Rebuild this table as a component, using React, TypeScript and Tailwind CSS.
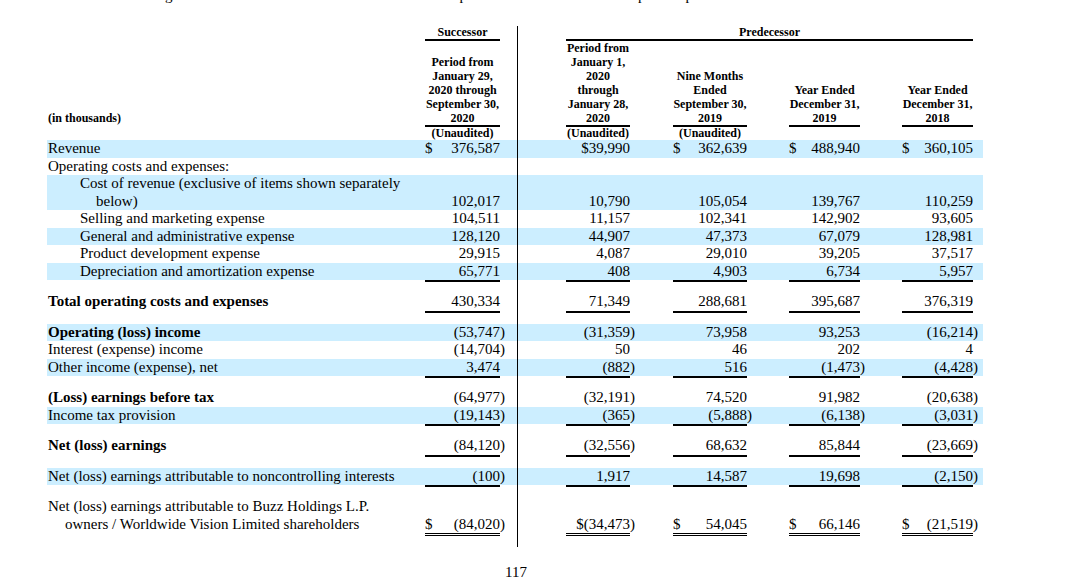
import React, { Fragment } from "react";

const BOX = ["w-[75px]", "w-[64px]", "w-[74px]", "w-[71px]", "w-[71px]"];
const TRAIL = ["w-[17px]", "w-[43px]", "w-[42px]", "w-[42px]", "w-[10px]"];

type Slot = { box?: React.ReactNode; trail?: React.ReactNode; boxClass?: string };

function Frame({
  cls = "",
  label,
  slots,
  labelClass = "",
}: {
  cls?: string;
  label?: React.ReactNode;
  slots?: Slot[];
  labelClass?: string;
}) {
  const s: Slot[] = slots ?? [{}, {}, {}, {}, {}];
  return (
    <div className={`flex w-[936px] ${cls}`}>
      <div className={`w-[378px] shrink-0 ${labelClass}`}>{label}</div>
      {s.map((x, i) => (
        <Fragment key={i}>
          <div className={`${BOX[i]} shrink-0 ${x.boxClass ?? ""}`}>{x.box}</div>
          <div className={`${TRAIL[i]} shrink-0`}>{x.trail}</div>
          {i === 0 && (
            <>
              <div className="w-px shrink-0 bg-black" />
              <div className="w-[48px] shrink-0" />
            </>
          )}
        </Fragment>
      ))}
    </div>
  );
}

type RowDef = {
  label: [string, string][];
  bg?: boolean;
  bold?: boolean;
  cells?: string[];
  line?: "single" | "double";
};

const rows: (RowDef | "gap")[] = [
  { label: [["Revenue", ""]], bg: true, cells: ["$ 376,587", "$39,990", "$ 362,639", "$ 488,940", "$ 360,105"] },
  { label: [["Operating costs and expenses:", ""]] },
  {
    label: [
      ["Cost of revenue (exclusive of items shown separately", "pl-[32px]"],
      ["below)", "pl-[48px]"],
    ],
    bg: true,
    cells: ["102,017", "10,790", "105,054", "139,767", "110,259"],
  },
  { label: [["Selling and marketing expense", "pl-[32px]"]], cells: ["104,511", "11,157", "102,341", "142,902", "93,605"] },
  { label: [["General and administrative expense", "pl-[32px]"]], bg: true, cells: ["128,120", "44,907", "47,373", "67,079", "128,981"] },
  { label: [["Product development expense", "pl-[32px]"]], cells: ["29,915", "4,087", "29,010", "39,205", "37,517"] },
  {
    label: [["Depreciation and amortization expense", "pl-[32px]"]],
    bg: true,
    cells: ["65,771", "408", "4,903", "6,734", "5,957"],
    line: "single",
  },
  "gap",
  {
    label: [["Total operating costs and expenses", ""]],
    bold: true,
    cells: ["430,334", "71,349", "288,681", "395,687", "376,319"],
    line: "single",
  },
  "gap",
  { label: [["Operating (loss) income", ""]], bold: true, bg: true, cells: ["(53,747)", "(31,359)", "73,958", "93,253", "(16,214)"] },
  { label: [["Interest (expense) income", ""]], cells: ["(14,704)", "50", "46", "202", "4"] },
  {
    label: [["Other income (expense), net", ""]],
    bg: true,
    cells: ["3,474", "(882)", "516", "(1,473)", "(4,428)"],
    line: "single",
  },
  "gap",
  { label: [["(Loss) earnings before tax", ""]], bold: true, cells: ["(64,977)", "(32,191)", "74,520", "91,982", "(20,638)"] },
  {
    label: [["Income tax provision", ""]],
    bg: true,
    cells: ["(19,143)", "(365)", "(5,888)", "(6,138)", "(3,031)"],
    line: "single",
  },
  "gap",
  {
    label: [["Net (loss) earnings", ""]],
    bold: true,
    cells: ["(84,120)", "(32,556)", "68,632", "85,844", "(23,669)"],
    line: "single",
  },
  "gap",
  {
    label: [["Net (loss) earnings attributable to noncontrolling interests", ""]],
    bg: true,
    cells: ["(100)", "1,917", "14,587", "19,698", "(2,150)"],
    line: "single",
  },
  "gap",
  {
    label: [
      ["Net (loss) earnings attributable to Buzz Holdings L.P.", ""],
      ["owners / Worldwide Vision Limited shareholders", "pl-[17px]"],
    ],
    cells: ["$ (84,020)", "$(34,473)", "$ 54,045", "$ 66,146", "$ (21,519)"],
    line: "double",
  },
];

function parse(s: string) {
  let d = false;
  let t = s;
  if (t.startsWith("$ ")) {
    d = true;
    t = t.slice(2);
  }
  const neg = t.endsWith(")");
  if (neg) t = t.slice(0, -1);
  return { d, t, neg };
}

function DataRow({ r }: { r: RowDef }) {
  const slots: Slot[] | undefined = r.cells?.map((c) => {
    const p = parse(c);
    return {
      boxClass: "flex flex-col justify-end",
      box: (
        <div className="flex justify-between leading-[17.5px] whitespace-nowrap">
          <span>{p.d ? "$" : ""}</span>
          <span>{p.t}</span>
        </div>
      ),
      trail: (
        <div className="flex h-full flex-col justify-end">
          <span className="leading-[17.5px]">{p.neg ? ")" : "\u00a0"}</span>
        </div>
      ),
    };
  });
  return (
    <>
      <Frame
        cls={r.bg ? "bg-[#cceeff]" : ""}
        labelClass={`pl-[1px] ${r.bold ? "font-bold" : ""}`}
        label={
          <div className="flex flex-col">
            {r.label.map(([t, c], i) => (
              <div key={i} className={`leading-[17.5px] whitespace-nowrap ${c}`}>
                {t}
              </div>
            ))}
          </div>
        }
        slots={slots}
      />
      {r.line === "single" && (
        <Frame
          cls="h-[2px]"
          slots={[0, 1, 2, 3, 4].map(() => ({ boxClass: "border-b-2 border-black" }))}
        />
      )}
      {r.line === "double" && (
        <Frame
          cls="h-[3px]"
          slots={[0, 1, 2, 3, 4].map(() => ({ boxClass: "border-b-[3px] border-double border-black" }))}
        />
      )}
    </>
  );
}

const HEAD: string[][] = [
  ["Period from", "January 29,", "2020 through", "September 30,", "2020"],
  ["Period from", "January 1,", "2020", "through", "January 28,", "2020"],
  ["Nine Months", "Ended", "September 30,", "2019"],
  ["Year Ended", "December 31,", "2019"],
  ["Year Ended", "December 31,", "2018"],
];

export default function App() {
  return (
    <div className="min-h-[587px] w-[1080px] bg-white pl-[47px] [font-family:'Liberation_Serif','Times_New_Roman',serif] text-[15px] text-black">
      {/* clipped line from previous page text */}
      <div className="h-[6px] overflow-hidden">
        <div className="-mt-[13px] flex leading-[17.5px]">
          <span className="ml-[118px]">g</span>
          <span className="ml-[287px]">p</span>
          <span className="ml-[171px]">p</span>
          <span className="ml-[40px]">p</span>
        </div>
      </div>

      <div className="mt-[20px]">
        {/* group header */}
        <div className="flex w-[936px] text-[12px] font-bold">
          <div className="w-[378px] shrink-0" />
          <div className="flex h-[15px] w-[75px] shrink-0 justify-center border-b-2 border-black leading-[13px]">
            Successor
          </div>
          <div className="w-[17px] shrink-0" />
          <div className="w-px shrink-0 bg-black" />
          <div className="w-[48px] shrink-0" />
          <div className="flex h-[15px] w-[407px] shrink-0 justify-center border-b-2 border-black leading-[13px]">
            Predecessor
          </div>
          <div className="w-[10px] shrink-0" />
        </div>

        {/* column headers */}
        <Frame
          cls="h-[84px] text-[12px] font-bold"
          labelClass="flex flex-col justify-end pl-[1px]"
          label={<div className="leading-[14px]">(in thousands)</div>}
          slots={HEAD.map((lines) => ({
            boxClass: "flex flex-col justify-end",
            box: lines.map((l, i) => (
              <div key={i} className="flex justify-center whitespace-nowrap leading-[14px]">
                {l}
              </div>
            )),
          }))}
        />
        <Frame
          cls="h-[2px]"
          slots={[0, 1, 2, 3, 4].map(() => ({ boxClass: "border-b-2 border-black" }))}
        />
        <Frame
          cls="h-[13px] text-[12px] font-bold"
          slots={[0, 1, 2, 3, 4].map((i) => ({
            boxClass: "flex justify-center whitespace-nowrap leading-[13px]",
            box: i < 3 ? "(Unaudited)" : null,
          }))}
        />

        {rows.map((r, i) =>
          r === "gap" ? <Frame key={i} cls="h-[11px]" /> : <DataRow key={i} r={r} />
        )}
        <Frame cls="h-[11px]" />
      </div>

      <div className="mt-[17px] pl-[458px] leading-[17.5px]">117</div>
    </div>
  );
}
